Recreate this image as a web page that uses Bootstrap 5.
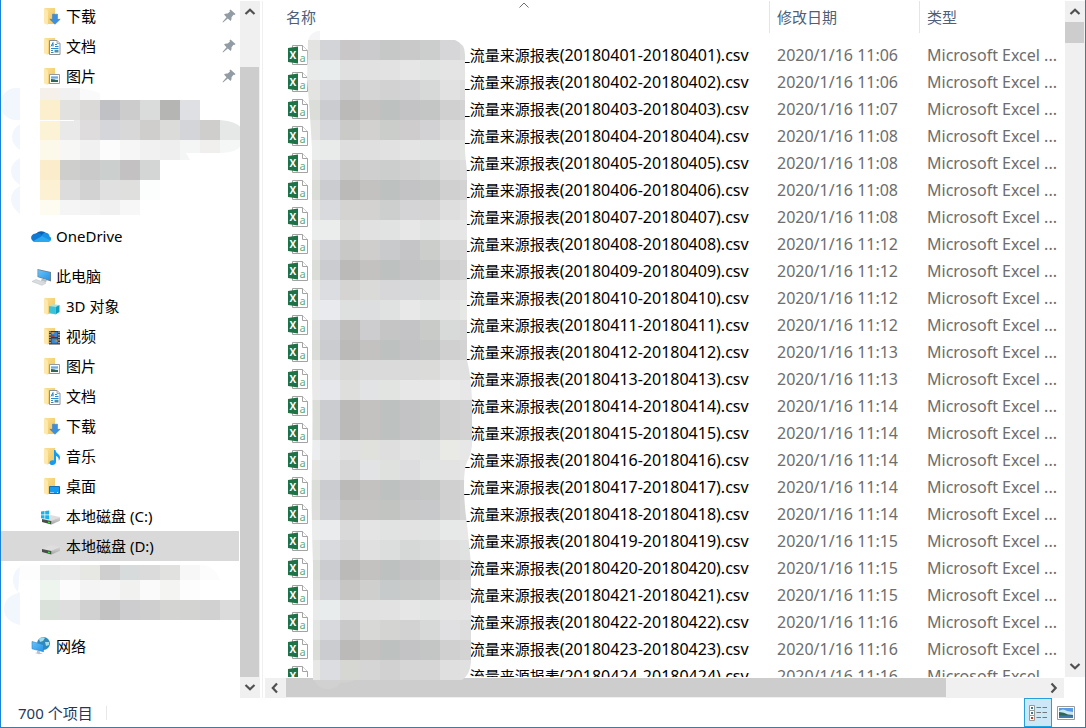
<!DOCTYPE html>
<html lang="zh-CN">
<head>
<meta charset="utf-8">
<meta name="viewport" content="width=device-width, initial-scale=1">
<title>本地磁盘 (D:)</title>
<link href="https://cdn.jsdelivr.net/npm/bootstrap@5.3.0/dist/css/bootstrap.min.css" rel="stylesheet">
<style>
  body { font: 15px/20px "Noto Sans", "Noto Sans CJK SC", sans-serif; color: #000; background: #fff; }
  .explorer { border: solid #1883d7; border-width: 0 1px 1px; }
  .panes { padding-top: 1px; }
  .side { width: 238px; margin-right: 1px; }
  .side-link { height: 30px; padding-left: 30px; gap: 5px; color: #000; }
  .side-link.sub { padding-left: 41px; gap: 4px; }
  .side-link.current { background: #d9d9d9; }
  .ico { width: 20px; height: 20px; flex: none; overflow: visible; }
  .pin { width: 14px; height: 14px; margin-right: 3px; }
  .spacer { height: 10px; }
  .smudge { position: absolute; left: -1px; pointer-events: none; }
  .smudge-a { height: 130px; }
  .smudge-a svg { top: -3px; }
  .smudge-b { height: 70px; }
  .smudge-b svg { top: 0; }
  .vbar { width: 20px; background: #f0f0f0; }
  .hbar { height: 20px; background: #f0f0f0; margin-left: 2px; margin-right: 1px; }
  .thumb { background: #cdcdcd; }
  .vbar .thumb { width: 19px; }
  .hbar .thumb { height: 19px; width: 660px; max-width: 83%; }
  .arrow { width: 19px; height: 21px; color: #505050; }
  .hbar .arrow { width: 21px; height: 19px; }
  .arrow svg { width: 12px; height: 12px; fill: none; stroke: currentColor; stroke-width: 2.2; }
  .up-space { height: 45px; }
  .split { width: 3px; border-right: 1px solid #f0f0f0; }
  .main-bar { margin-bottom: 21px; }
  .main-bar .thumb { height: 21px; }
  .list { padding-left: 16px; margin-bottom: 1px; }
  .files { table-layout: fixed; --bs-table-bg: transparent; line-height: 20px; }
  .files > thead > tr > th { padding: 0 0 8px; font-weight: 400; color: #4c607a; position: relative; }
  .files .head { height: 32px; padding-left: 7px; border-left: 1px solid #e5e5e5; }
  .files th:first-child .head { border-left: 0; }
  .files > tbody > tr > td { height: 27px; padding: 0 0 0 8px; white-space: nowrap; color: #6d6d6d; }
  .files > tbody > tr > td:first-child { padding-left: 9px; color: #000; }
  .gap-name { width: 155px; flex: none; }
  .files .latin { font-size: 16px; }
  .date-col { width: 150px; }
  .type-col { width: 146px; }
  .caret-up { position: absolute; top: 1px; left: 50%; margin-left: -5px; width: 10px; height: 6px; }
  .mosaic { position: absolute; left: 43px; top: 29px; pointer-events: none; z-index: 2; }
  .status { height: 29px; padding: 0 5px 0 17px; color: #1e395b; }
  .status .rule { width: 1px; height: 14px; margin-left: 13px; background: #e8e8e8; }
  .view { width: 28px; height: 29px; border-radius: 0; }
  .view.active { background: #cce8f6; border: 1px solid #26a0da; }
</style>
</head>
<body class="vh-100 overflow-hidden">
<svg class="position-absolute" width="0" height="0" aria-hidden="true">
  <defs>
    <linearGradient id="gf" x1="0" x2="1" y1="0" y2="1"><stop offset="0" stop-color="#fbe094"/><stop offset="1" stop-color="#efc55f"/></linearGradient>
    <linearGradient id="gd" x1="0" x2="0" y1="0" y2="1"><stop offset="0" stop-color="#d8d8d8"/><stop offset="1" stop-color="#a4a4a4"/></linearGradient>
    <linearGradient id="gs" x1="0" x2="1" y1="0" y2="1"><stop offset="0" stop-color="#69c4fb"/><stop offset="1" stop-color="#2493e6"/></linearGradient>
    <linearGradient id="gp" x1="0" x2="0" y1="0" y2="1"><stop offset="0" stop-color="#3f86d8"/><stop offset=".55" stop-color="#d6ecf5"/><stop offset=".6" stop-color="#35715f"/><stop offset="1" stop-color="#2f5f86"/></linearGradient>
  </defs>
  <symbol id="folder" viewBox="0 0 20 20"><path fill="url(#gf)" d="M2.500 2H13v16H5z"/><path fill="#fde9ae" d="M2 2.200l3.200 1.600.7 2V19L2 17.200z"/></symbol>
  <symbol id="download" viewBox="0 0 20 20"><use href="#folder"/><path fill="#3c8fdc" stroke="#2d79c2" stroke-width=".5" d="M10.500 8.200h5v5.100h2.700L13 18.300l-5.200-5h2.700z"/></symbol>
  <symbol id="docs" viewBox="0 0 20 20"><use href="#folder"/><path fill="#fff" stroke="#8b8f93" d="M7.500 4.500h7.500l3 3v11H7.500z"/><path fill="#dfe2e5" stroke="#8b8f93" stroke-width=".7" d="M15 4.500v3h3"/><path stroke="#2b8bd0" fill="none" d="M9 10.500l2-4v4M9.500 9h2M13 8.500h2M13 10.500h3.500M9 12.500h7.500M9 14.500h2"/><path fill="#4f8fa5" d="M12.500 13.800h4v2.700h-4z"/><path stroke="#4d7c9c" d="M9 16.500h2.500"/></symbol>
  <symbol id="pics" viewBox="0 0 20 20"><use href="#folder"/><path fill="#fff" stroke="#94999e" d="M7.500 8.500h10v9h-10z"/><path fill="url(#gp)" d="M9 10.500h7V16H9z"/><path fill="#2e6753" d="M9 13q4 0 7 2v1H9z"/></symbol>
  <symbol id="cube" viewBox="0 0 20 20"><use href="#folder"/><path fill="#9be6f2" d="M7 10l4.500-1.800 6 .8-4 2z"/><path fill="#39c2dc" d="M7 10l6.500 1v7.500L7 16.500z"/><path fill="#119fbf" d="M13.500 11l4-2v7l-4 2.500z"/></symbol>
  <symbol id="film" viewBox="0 0 20 20"><use href="#folder"/><path fill="#38383a" d="M7 5h11v13.500H7z"/><path stroke="#f5f5f5" stroke-width="1.100" stroke-dasharray="1.300 1.300" d="M8 5.500v13M17 5.500v13"/><path fill="#3987d3" d="M9.500 6h6v5h-6zM9.500 12.500h6v5h-6z"/><path fill="#d79335" d="M9.500 6h3l-1 2h-2zM12 15l3.500-1v2z"/><path fill="#a63e32" d="M10 9h2.500v2H10z"/></symbol>
  <symbol id="music" viewBox="0 0 20 20"><use href="#folder"/><path fill="#139cf3" d="M12 4h1.500c.2 3.500 4.500 4 4.500 7.500 0 1.500-.7 2.500-1.200 3.200.3-3-1.300-4.200-2.800-4.700V16c0 4-6.800 4-6.500.5.300-2 2.800-2.700 4.500-2z"/></symbol>
  <symbol id="desk" viewBox="0 0 20 20"><use href="#folder"/><path fill="#149cf2" stroke="#1172b8" d="M7.500 10.500h10v7h-10z"/><path stroke="#fff" stroke-dasharray="1 1" d="M8.500 16.500h3M15 16.500h2"/></symbol>
  <symbol id="drive" viewBox="0 0 20 20"><path fill="#dedede" d="M0 13l8.500-4 9.500 2-8.500 4z"/><path fill="url(#gd)" d="M9 15l9-4v3.700L9.500 18.500z"/><path fill="#4c4c4c" d="M0 13l9.300 2v3.500L0 16z"/><path fill="#39e042" d="M6 15.500l2 .5v1.300L6 17z"/></symbol>
  <symbol id="cdrive" viewBox="0 0 20 20" overflow="visible"><use href="#drive" width="20" height="20"/><path fill="#fff" d="M-1 4.500h8.500v8H-1z"/><path fill="#18b2ec" d="M-1 5.500l3.500-.4v3.400H-1zM3.200 5l4-.5v4h-4zM-1 9.200h3.500v3.400l-3.500-.4zM3.200 9.200h4v4l-4-.5z"/></symbol>
  <symbol id="cloud" viewBox="0 0 20 20"><path fill="#0b62b8" d="M5 8a6 5 0 0110-1l-3 4-7-1z"/><path fill="#0f79d4" d="M4.500 7.500c2-.8 4-.3 5.500 1l4 2.500-9 5H4C-1.500 15-1 8 4.500 7.500z"/><path fill="#1791e8" d="M11 9c3-4.500 8-1 7.500 1.500 2 .5 2 3 .8 4.500L10 12z"/><path fill="#29a8ee" d="M2 15.300l9-5.300 8.500 4.500c-.5 1-1.500 1.500-3 1.500H4.500c-1 0-2-.3-2.500-.7z"/></symbol>
  <symbol id="pc" viewBox="0 0 20 20"><path fill="#6e8191" d="M6.500 3L20 6v9.500L6.500 11z"/><path fill="url(#gs)" d="M7.200 4l12 2.700v7.500l-12-3.700z"/><path fill="#b7bec4" d="M11 12.500l5 1.500-1 2.300-5-1.500z"/><path fill="#d9dde0" stroke="#b4babf" stroke-width=".5" d="M1 15.500l4-2 10 3.500-4 2.300z"/></symbol>
  <symbol id="net" viewBox="0 0 20 20"><circle cx="12.500" cy="7.500" r="6.500" fill="#3289b9"/><path fill="#a5dcec" d="M8 3q3-3 6-1l-2 3-3 1zM14 6h4v3l-3 1z"/><path fill="url(#gs)" stroke="#2b83c8" stroke-width=".6" d="M1 5.500l11.500 3.200v7L1 12.800z"/><path fill="#bcc4ca" d="M6 14.500l3 .8v1.500l3 .7-4 .8-4-1.300 2-.5z"/></symbol>
  <symbol id="pinned" viewBox="0 0 14 14"><path fill="#929ca5" d="M8.500.5l5 4.500-1 1-1-.2-2 2.500q.5 2.200-.8 3.700L5.800 9.500 1 13.500l-.5-.5 4-4.800L2 5.500q1.500-1.300 3.700-1L8 2.500 7.500 1.500z"/></symbol>
  <symbol id="csv" viewBox="0 0 20 20"><path fill="#fff" stroke="#a3a3a3" d="M4.500.5h10l5 5v14h-15z"/><path fill="#fff" stroke="#a3a3a3" d="M14.500.5v5h5"/><path fill="#1f7246" d="M0 3l10-1.500v17L0 17z"/><text x="1.600" y="13.600" fill="#fff" font-family="Open Sans" font-weight="700" font-size="10">X</text><text x="11.400" y="17" fill="#5fab83" font-family="Noto Sans" font-size="11">a</text></symbol>
</svg>

<div class="explorer d-flex flex-column h-100">
  <div class="panes d-flex flex-grow-1 overflow-hidden">
    <nav class="side flex-shrink-0" id="tree" aria-label="导航窗格"></nav>
    <div class="vbar d-flex flex-column flex-shrink-0">
      <button class="arrow btn p-0 border-0 d-flex align-items-center justify-content-center" aria-label="向上滚动"><svg viewBox="0 0 12 12"><path d="M1.500 8L6 3.800 10.500 8"/></svg></button>
      <div class="up-space"></div>
      <div class="thumb flex-grow-1"></div>
      <button class="arrow btn p-0 border-0 d-flex align-items-center justify-content-center" aria-label="向下滚动"><svg viewBox="0 0 12 12"><path d="M1.500 3L6 7.200 10.500 3"/></svg></button>
    </div>
    <div class="split flex-shrink-0"></div>
    <main class="d-flex flex-grow-1 position-relative overflow-hidden">
      <div class="d-flex flex-column flex-grow-1 overflow-hidden">
        <div class="list flex-grow-1 overflow-hidden">
          <table class="files table table-borderless align-middle mb-0">
            <colgroup><col><col class="date-col"><col class="type-col"></colgroup>
            <thead><tr>
              <th scope="col"><div class="head d-flex align-items-center">名称</div><svg class="caret-up" viewBox="0 0 10 6"><path fill="none" stroke="#6d6d6d" d="M.5 5.500L5 1l4.500 4.500"/></svg></th>
              <th scope="col"><div class="head d-flex align-items-center">修改日期</div></th>
              <th scope="col"><div class="head d-flex align-items-center">类型</div></th>
            </tr></thead>
            <tbody id="rows"></tbody>
          </table>
        </div>
        <div class="hbar d-flex flex-shrink-0">
          <button class="arrow btn p-0 border-0 d-flex align-items-center justify-content-center flex-shrink-0" aria-label="向左滚动"><svg viewBox="0 0 12 12"><path d="M7 1.500L2.800 6 7 10.500"/></svg></button>
          <div class="thumb"></div>
          <button class="arrow btn p-0 border-0 d-flex align-items-center justify-content-center flex-shrink-0 ms-auto" aria-label="向右滚动"><svg viewBox="0 0 12 12"><path d="M3.500 1.500L7.700 6l-4.200 4.500"/></svg></button>
        </div>
      </div>
      <div class="vbar main-bar d-flex flex-column flex-shrink-0">
        <button class="arrow btn p-0 border-0 d-flex align-items-center justify-content-center" aria-label="向上滚动"><svg viewBox="0 0 12 12"><path d="M1.500 8L6 3.800 10.500 8"/></svg></button>
        <div class="thumb"></div>
        <button class="arrow btn p-0 border-0 d-flex align-items-center justify-content-center mt-auto" aria-label="向下滚动"><svg viewBox="0 0 12 12"><path d="M1.500 3L6 7.200 10.500 3"/></svg></button>
      </div>
      <svg class="mosaic" id="mosaic" width="170" height="664" viewBox="306 30 170 664" aria-hidden="true"></svg>
    </main>
  </div>
  <footer class="status d-flex align-items-center flex-shrink-0">
    <span>700 个项目</span><span class="rule"></span>
    <button class="view active btn p-0 ms-auto d-flex align-items-center justify-content-center" aria-label="详细信息">
      <svg width="18" height="16" viewBox="0 0 18 16"><path fill="#fff" stroke="#999" d="M.5.500h5v5h-5zM.5 5.500h5v5h-5zM.5 10.500h5v5h-5z"/><path fill="#3b7a8c" d="M2 2h2v2H2zM2 7h2v2H2z"/><path fill="#c23b1c" d="M2 12h2v2H2z"/><path stroke="#737880" d="M7.500 2.500h4.500M13.500 2.500H18M7.500 7.500h4.500M13.500 7.500H18M7.500 12.500h4.500M13.500 12.500H18"/></svg>
    </button>
    <button class="view btn p-0 border-0 d-flex align-items-center justify-content-center" aria-label="大缩略图">
      <svg width="18" height="14" viewBox="0 0 18 14"><path fill="#fff" stroke="#999" d="M.5.500h17v13H.5z"/><path fill="#5a9be6" d="M2 2h14v4H2z"/><path fill="#c9e6f5" d="M2 5q4-3 8 0l6 1v3H2z"/><path fill="#2c6652" d="M2 6q5 0 9 2.500l5 .5v1H2z"/><path fill="#3d7aab" d="M2 9.500h14V12H2z"/></svg>
    </button>
  </footer>
</div>
<script src="https://cdn.jsdelivr.net/npm/bootstrap@5.3.0/dist/js/bootstrap.bundle.min.js"></script>
<script>
  const link = (icon, label, cls = 'sub', pin = false) =>
    `<a href="#" class="side-link ${cls} d-flex align-items-center text-decoration-none"><svg class="ico" aria-hidden="true"><use href="#${icon}"/></svg><span>${label}</span>${pin ? '<svg class="pin ms-auto" aria-hidden="true"><use href="#pinned"/></svg>' : ''}</a>`;

  // Pixelated cells: each entry is y, height, first x, then one colour per 20px cell
  const cells = list => list.map(([y, h, x, colours]) => colours.split(' ').map((c, i) =>
    `<rect x="${x + i * 20}" y="${y}" width="20" height="${h}" fill="#${c}"/>`).join('')).join('');

  const blurA = '<defs><clipPath id="ca"><path d="M0 88h80q15 3 20 5v7h100v20h20q20 2 22 10v14q-4 9-22 9h-34l4 7h-30v55H0z"/></clipPath></defs><g clip-path="url(#ca)"><path fill="#f1f7fc" d="M20 88h-4a16 16 0 000 32h4zM20 124q-8 5-8 13t8 13zM20 158q-9 5-9 13t9 14zM20 186q-9 5-9 13t9 15z"/>' + cells([
    [88, 12, 40, 'f5f1ea f1f1f1 fafafa'],
    [100, 20, 40, 'fbefcd e1e1e0 dbd9d8 bfc1c4 cccccc d9dcdb b5b5b3 dfe0e3'],
    [120, 20, 40, 'fcf2d5 e9e9e9 dedcdc d4d6da d8d8d9 d0cecc dbdbd9 d3d5d9 d0cecd e5e8e7'],
    [140, 20, 40, 'fcf8ea f7f7f6 f1f1f2 fcfcfd f6f6f7 f1f1f1 eeeeee f4f6f6 f0efed f5f7f7'],
    [160, 20, 40, 'fbedcb cecfcd cacaca cbcfcd c4c1c2 d3d6d5'],
    [180, 20, 40, 'fcf1d3 dcdcdd d2d2d2 e0e0e1 dfdfde fcfdfd'],
    [200, 15, 40, 'fefcf0 f5f5f5 f3f3f4 f0f0f1 f7f7f8']]) + '<path fill="#fff" d="M40 120h34v1H40z"/></g>';
  const blurB = '<defs><clipPath id="cb"><path d="M0 575q10-10 25-10h180q12 4 15 15v20h20v20H60v5H0z"/></clipPath></defs><g clip-path="url(#cb)"><path fill="#f1f7fc" d="M20 567q-7 4-7 13t7 13v32q-16-4-16-16t14-16z"/>' + cells([
    [565, 15, 20, 'fdfdfe e8eaea ebebec e7e7e4 cfcfd0 d8dbdb dbdbdc e1e1df f7f7f7 fcfcfc'],
    [580, 20, 40, 'edf5ee fcfcfd f4f4f5 f6f6f7 f1f1ef fafafa f4f4f2 fdfdfd'],
    [600, 20, 40, 'dae1da dedede d1d1d1 c3c3c3 cdcdcf cfcfd0 d4d4d2 d3d3d1 d1d1d2 dbdbdc']]) + '</g>';

  document.getElementById('tree').innerHTML =
    link('download', '下载', 'sub', true) + link('docs', '文档', 'sub', true) + link('pics', '图片', 'sub', true) +
    `<div class="smudge-a position-relative"><svg class="smudge" width="241" height="130" viewBox="0 88 241 130" aria-hidden="true">${blurA}</svg></div>` +
    link('cloud', 'OneDrive', '') + '<div class="spacer"></div>' + link('pc', '此电脑', '') +
    link('cube', '3D 对象') + link('film', '视频') + link('pics', '图片') + link('docs', '文档') + link('download', '下载') +
    link('music', '音乐') + link('desk', '桌面') + link('cdrive', '本地磁盘 (C:)') + link('drive', '本地磁盘 (D:)', 'sub current') +
    `<div class="smudge-b position-relative"><svg class="smudge" width="240" height="66" viewBox="0 561 240 66" aria-hidden="true">${blurB}</svg></div>` +
    link('net', '网络', '');

  const times = '06 06 07 08 08 08 08 12 12 12 12 13 13 14 14 14 14 14 15 15 15 16 16 16'.split(' ');
  const hour = '11';
  document.getElementById('rows').innerHTML = times.map((m, i) => {
    const d = '201804' + String(i + 1).padStart(2, '0');
    return `<tr><td><div class="d-flex align-items-center"><svg class="ico" aria-hidden="true"><use href="#csv"/></svg><span class="gap-name"></span><span>_流量来源报表<span class="latin">(${d}-${d}).csv</span></span></div></td><td class="latin">2020/1/16 ${hour}:${m}</td><td class="latin">Microsoft Excel ...</td></tr>`;
  }).join('');

  const dark = 'dbddd8 cbccd0 bbbab8 c4c2c1 bdc1c0 c3c2c5 c4c6c6 d0d0d0 d3d3d3';
  const shades = [
    'e3e4e1 d2d4d8 c9c7c7 cbcbcd c6c8c8 c9c9ca cbcecc d6d6d9 dbdbdb',
    'e9ebea e9ecec e0e0e1 e1e1e1 e2e2e3 e6e6e7 e2e4e4 e4e4e5 e4e4e4',
    'e3e3e1 d6d8dc cacaca d5d5d5 d2d2d2 d3d3d6 d6d9d8 e1e1e1 dddddd',
    dark,
    'e3e3e1 d6d7db cacac8 d2d1cf cbcdcb cfccce d2d2d4 dbdbdb dddddd',
    'ebecec e9ebeb dededf dfdfdf e0e1e0 e4e4e5 e0e3e2 e2e2e3 e3e5e3',
    'e1e1e0 d5d7db c9c9c7 d0cfcf cccece d0d0d1 d1d4d3 dadadb dddddd',
    dark,
    'e5e6e4 d9dade d5d3d1 d4d2d0 cdcfcf d4d4d6 d4d4d5 dededf e2e2e2',
    'ebecec ebeded dadad8 e1e1e2 e1e3e2 e7e7e8 e1e3e3 e5e5e6 e6e6e6',
    'e1e1df d2d3d6 c8c8c6 d0cecc c9cacb c5c4c7 cccecc d7d7d8 d8d8d9',
    dark,
    'e8e8e6 dcdde1 d6d4d2 dadad9 d7d7d9 d7d8d9 d6d9d7 e0e0e0 e1e1e1',
    'e9eaea e8eaee dedfdf dddee0 e0e2e1 e8e8e8 e1e4e2 e3e3e4 e6e8e6',
    'dfdfdd cecfd3 bfbebc cdcdcf c5c5c6 c4c4c7 c9cbc9 d8dad9 d7d7d7',
    dark,
    'e8e8e7 dee0e2 d9d9d7 dadada dadadb dadadb dbdbda e1e1e2 e0e0e1',
    'e9e9e9 e6e7ea dedfdd e2e3e5 e2e4e2 e7e7e8 e7e7e8 eaeaea e7e7e7',
    dark, dark,
    'ecedee e4e5e6 e0e0e0 e0e0dd dededf e3e3e4 dfe2e1 e9e9e6 e7e7e7',
    'e5e6e4 e2e3e5 d7d7d8 e2e3e5 dfe1df dddddf e2e3e3 e3e3e4 e5e5e5',
    dark,
    'dededc cecfd2 c6c4c2 c6c4c2 c2c4c2 c8c8c9 c8c9ca d1d1d2 d5d5d5',
    'ebecec e9ebec d9d9da e4e4e5 e0e3e1 e2e2e2 e1e3e2 e7e8e8 e8e8e8',
    'e3e5e3 d9dade d3d3d4 dfe0df dcdddd d6d8d8 d9dada dfdfe0 e0e2e1',
    dark,
    'dfdfdd d2d4d8 c8c6c4 cfcfcd c7caca c9cbcb cacdcb d8d8d9 dadadb',
    'e9ebea e9ecec e0e0e1 e1e1e1 e2e2e3 e6e6e7 e2e4e4 e4e4e5 e4e4e4',
    'e3e5e3 d8d9dc c9c9ca d8d8d6 d4d5d3 d2d2d3 d7d9d8 e0e0e2 dddddd',
    dark,
    'e7e8e6 dcdde1 d6d6d3 d5d5d5 d1d1d1 d6d6d7 d6d6d6 dfdfe0 e0e0e0'];
  document.getElementById('mosaic').innerHTML =
    '<defs><clipPath id="cm"><path d="M308 40h147q10 4 10 14v98l2 20v188q4 16 5 40v45q-1 10-5 17-3 6-3 24 0 18 3 38 2 20 4 40v98q-1 13-9 18H313V565q-2-50-1-105 1-40 0-80V150q-2-40-5-70z"/></clipPath></defs>' +
    '<path fill="#f5f5f8" d="M308 40q3-9 12-9v9z"/><path fill="#d1d1d1" d="M314 680h41q-3 2-15 3-4 6-12 6-10 0-14-9z"/>' +
    `<g clip-path="url(#cm)">${cells(shades.map((s, i) => [40 + i * 20, 20, 300, s]))}</g>`;
</script>
</body>
</html>
